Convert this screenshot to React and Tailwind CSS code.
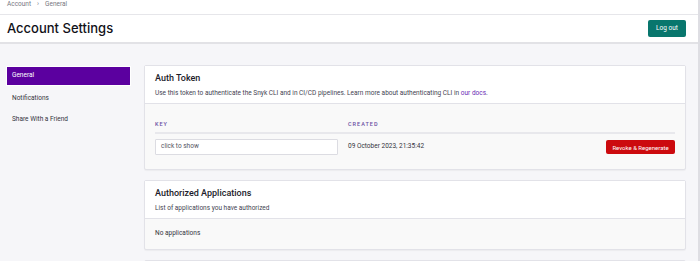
import React from 'react';

const font = { fontFamily: 'Roboto, "Liberation Sans", sans-serif' };

function Card({ title, description, children }) {
    return (
        <div className="border border-[#e2e2e8] rounded-[2px] bg-[#f9f9f9] shadow-[0_1px_1px_rgba(0,0,0,0.04)]">
            <div className="bg-white px-[10px] pt-[5px] pb-[4px] border-b border-[#e2e2e8]">
                <h3 className="text-[9px] font-medium text-[#1c1c2a] leading-[14px]">{title}</h3>
                <p className="mt-[2px] text-[6.5px] text-[#444452] leading-[12px]">{description}</p>
            </div>
            {children}
        </div>
    );
}

export default function App() {
    const menu = ['General', 'Notifications', 'Share With a Friend'];

    return (
        <div className="w-[700px] h-[261px] overflow-hidden bg-[#f6f6f9] border-r-2 border-[#dedee3]" style={font}>
            {/* Migas de pan */}
            <div className="h-[15px] bg-white border-b border-[#e6e6ea] px-[7px] flex items-start">
                <div className="flex items-center gap-[6px] text-[6.5px] text-[#77777f] leading-[9px]">
                    <span>Account</span>
                    <span>›</span>
                    <span>General</span>
                </div>
            </div>

            {/* Cabecera */}
            <div className="h-[29px] bg-white border-b-2 border-[#e2e2e6] flex items-center justify-between pl-[7px] pr-[12px]">
                <h1 className="text-[13px] font-medium text-[#111118] leading-none" style={{ fontFamily: 'Inter, "Liberation Sans", sans-serif' }}>
                    Account Settings
                </h1>
                <button className="w-[38px] h-[17px] bg-[#08766d] text-white text-[6.5px] rounded-[2px]">Log out</button>
            </div>

            <div className="flex pt-[21px]">
                {/* Menú lateral */}
                <div className="w-[144px] pl-[7px] pr-[14px] pt-[2px]">
                    {menu.map((item, i) => (
                        <div
                            key={item}
                            className={
                                i === 0
                                    ? 'h-[18px] flex items-center px-[5px] bg-[#5b009f] text-white text-[6.5px] shadow-[0_0_0_1px_#fff] mb-[5px]'
                                    : 'h-[18px] flex items-center px-[5px] text-[#33333d] text-[6.5px] mb-[3px]'
                            }
                        >
                            {item}
                        </div>
                    ))}
                </div>

                {/* Contenido */}
                <div className="flex-1 pr-[12px] flex flex-col gap-[10px]">
                    <Card
                        title="Auth Token"
                        description={
                            <>
                                Use this token to authenticate the Snyk CLI and in CI/CD pipelines. Learn more about authenticating CLI in{' '}
                                <span className="text-[#6a2bb5]">our docs</span>.
                            </>
                        }
                    >
                        <div className="px-[10px] pt-[16px] pb-[14px]">
                            <div className="flex border-b-2 border-[#e8e8ec] pb-[4px] text-[5.5px] tracking-[1px] text-[#6a4fa3] font-medium">
                                <div className="w-[193px]">KEY</div>
                                <div>CREATED</div>
                            </div>
                            <div className="flex items-center mt-[5px]">
                                <div className="w-[183px] h-[16px] bg-white border border-[#dcdce2] rounded-[1px] flex items-center px-[5px] text-[6.5px] text-[#55555f]">
                                    click to show
                                </div>
                                <div className="ml-[10px] text-[6.5px] text-[#33333d]">09 October 2023, 21:35:42</div>
                                <button className="ml-auto w-[69px] h-[14px] bg-[#cc0a0e] text-white text-[6px] rounded-[2px]">
                                    Revoke &amp; Regenerate
                                </button>
                            </div>
                        </div>
                    </Card>

                    <Card title="Authorized Applications" description="List of applications you have authorized">
                        <div className="px-[10px] h-[30px] flex items-center text-[6.5px] text-[#33333d]">No applications</div>
                    </Card>

                    <div className="h-[20px] border border-[#e2e2e8] rounded-[2px] bg-white"></div>
                </div>
            </div>
        </div>
    );
}
